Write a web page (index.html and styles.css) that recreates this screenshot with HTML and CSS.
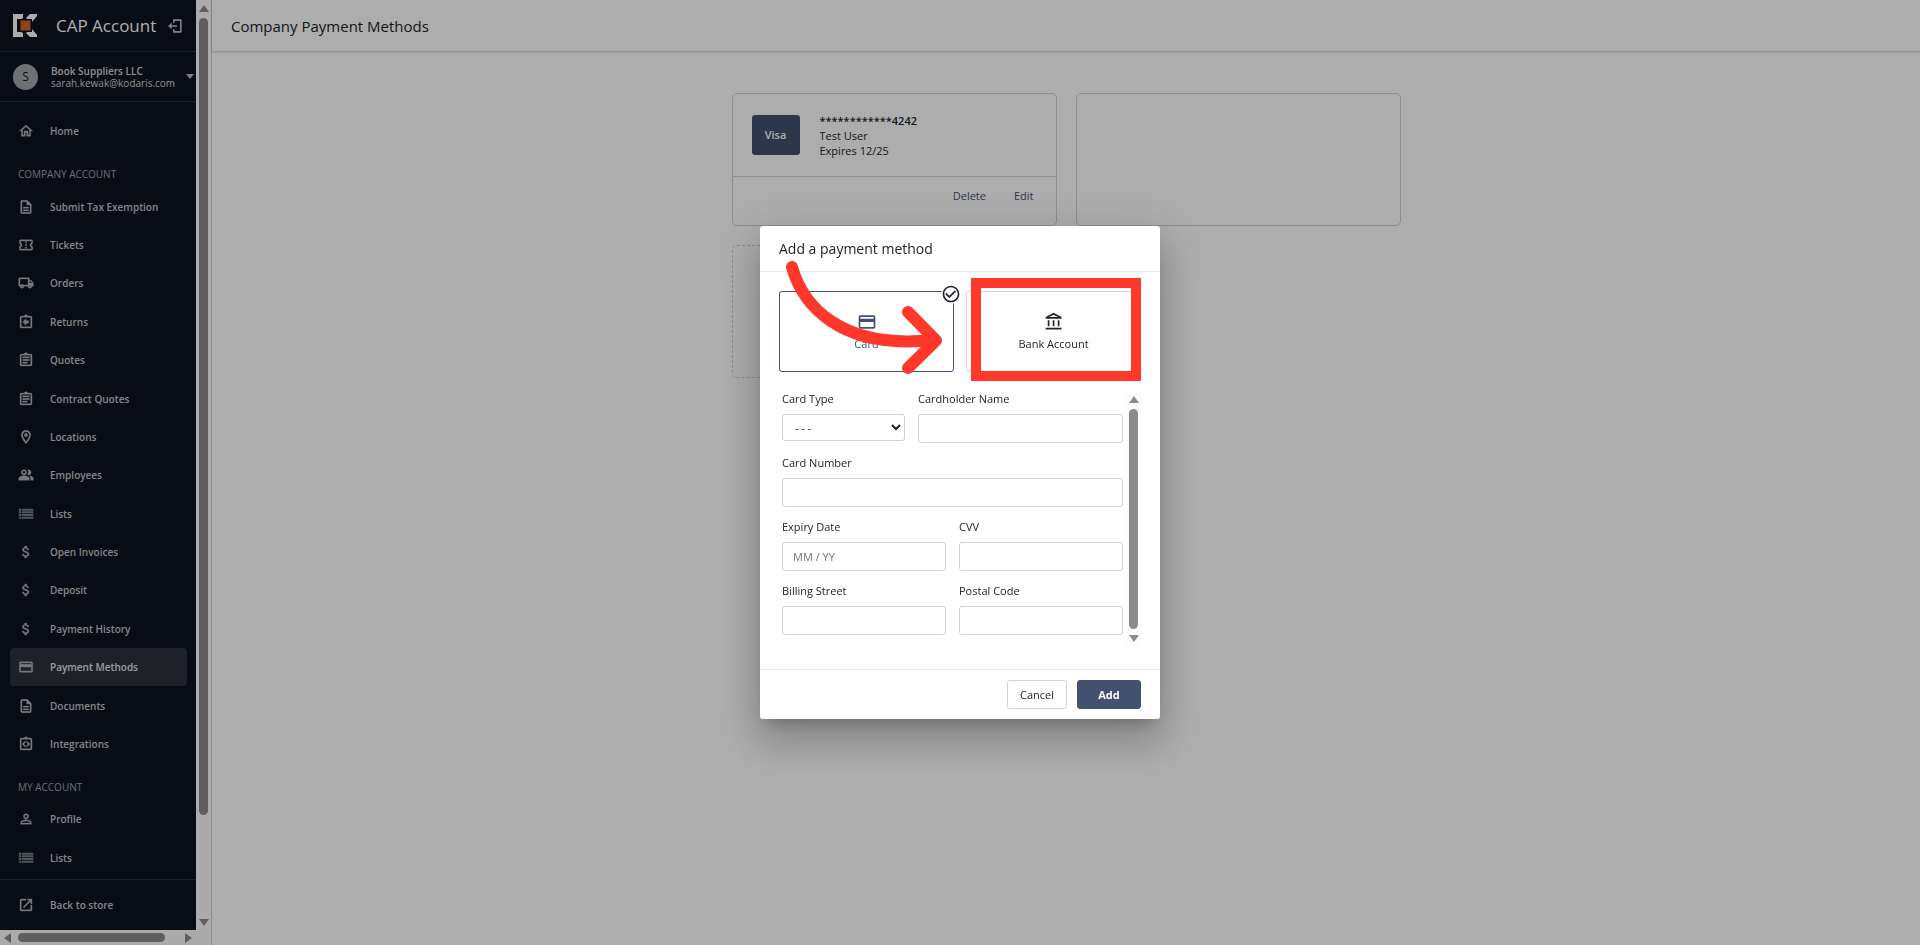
FILE: index.html
```html
<!DOCTYPE html>
<html lang="en">
<head>
    <meta charset="UTF-8">
    <meta name="viewport" content="width=device-width, initial-scale=1.0">
    <title>Company Payment Methods</title>
    <link rel="stylesheet" href="styles.css">
</head>
<body>
    <!-- Icon set -->
    <svg class="icon-set" aria-hidden="true">
        <symbol id="home" viewBox="0 0 24 24"><path d="M12 5.69l5 4.5V18h-2v-6H9v6H7v-7.81l5-4.5M12 3L2 12h3v8h6v-6h2v6h6v-8h3L12 3z"/></symbol>
        <symbol id="document" viewBox="0 0 24 24"><path d="M8 16h8v2H8zm0-4h8v2H8zm6-10H6c-1.1 0-2 .9-2 2v16c0 1.1.89 2 1.99 2H18c1.1 0 2-.9 2-2V8l-6-6zm4 18H6V4h7v5h5v11z"/></symbol>
        <symbol id="ticket" viewBox="0 0 24 24"><path d="M22 10V6c0-1.11-.9-2-2-2H4c-1.1 0-1.99.89-1.99 2v4c1.1 0 1.99.9 1.99 2s-.89 2-2 2v4c0 1.1.9 2 2 2h16c1.1 0 2-.9 2-2v-4c-1.1 0-2-.9-2-2s.9-2 2-2zm-2-1.46c-1.19.69-2 1.99-2 3.46s.81 2.77 2 3.46V18H4v-2.54c1.19-.69 2-1.99 2-3.46 0-1.48-.8-2.77-1.99-3.46L4 6h16v2.54zM11 15h2v2h-2zm0-4h2v2h-2zm0-4h2v2h-2z"/></symbol>
        <symbol id="truck" viewBox="0 0 24 24"><path d="M20 8h-3V4H3c-1.1 0-2 .9-2 2v11h2c0 1.66 1.34 3 3 3s3-1.34 3-3h6c0 1.66 1.34 3 3 3s3-1.34 3-3h2v-5l-3-4zm-.5 1.5l1.96 2.5H17V9.5h2.5zM6 18c-.55 0-1-.45-1-1s.45-1 1-1 1 .45 1 1-.45 1-1 1zm2.22-3c-.55-.61-1.33-1-2.22-1s-1.67.39-2.22 1H3V6h12v9H8.22zM18 18c-.55 0-1-.45-1-1s.45-1 1-1 1 .45 1 1-.45 1-1 1z"/></symbol>
        <symbol id="return" viewBox="0 0 24 24"><path d="M19 3h-4.18C14.4 1.84 13.3 1 12 1s-2.4.84-2.82 2H5c-1.1 0-2 .9-2 2v14c0 1.1.9 2 2 2h14c1.1 0 2-.9 2-2V5c0-1.1-.9-2-2-2zm0 16H5V5h14v14zM12 17l-5-5 5-5v3h4v4h-4v3z"/></symbol>
        <symbol id="quote" viewBox="0 0 24 24"><path d="M19 3h-4.18C14.4 1.84 13.3 1 12 1s-2.4.84-2.82 2H5c-1.1 0-2 .9-2 2v14c0 1.1.9 2 2 2h14c1.1 0 2-.9 2-2V5c0-1.1-.9-2-2-2zm0 16H5V5h14v14zM7 15h7v2H7zm0-4h10v2H7zm0-4h10v2H7z"/></symbol>
        <symbol id="pin" viewBox="0 0 24 24"><path d="M12 2C8.13 2 5 5.13 5 9c0 5.25 7 13 7 13s7-7.75 7-13c0-3.87-3.13-7-7-7zM7 9c0-2.76 2.24-5 5-5s5 2.24 5 5c0 2.88-2.88 7.19-5 9.88C9.92 16.21 7 11.85 7 9z"/><circle cx="12" cy="9" r="2.5"/></symbol>
        <symbol id="people" viewBox="0 0 24 24"><path fill-rule="evenodd" d="M9 4a4 4 0 1 0 0 8 4 4 0 0 0 0-8zm0 2a2 2 0 1 1 0 4 2 2 0 0 1 0-4zM1 20v-3c0-2.7 5.3-4 8-4s8 1.3 8 4v3zM14.5 4.200a4 4 0 1 1 0 7.600c1.300-2.300 1.300-5.300 0-7.600zM17 13.300c2.700.500 6 1.700 6 3.700v3h-4v-3c0-1.600-.800-2.800-2-3.700z"/></symbol>
        <symbol id="list" viewBox="0 0 24 24"><path d="M1 4h4v3H1zm5 0h17v3H6zM1 8h4v3H1zm5 0h17v3H6zM1 12h4v3H1zm5 0h17v3H6zM1 16h4v3H1zm5 0h17v3H6z"/></symbol>
        <symbol id="dollar" viewBox="0 0 24 24"><path d="M11.800 10.900c-2.270-.590-3-1.200-3-2.150 0-1.090 1.010-1.850 2.700-1.850 1.780 0 2.440.850 2.500 2.100h2.210c-.070-1.720-1.120-3.300-3.210-3.810V3h-3v2.160c-1.940.420-3.500 1.680-3.500 3.610 0 2.310 1.910 3.460 4.700 4.130 2.500.600 3 1.480 3 2.410 0 .690-.490 1.790-2.700 1.790-2.060 0-2.870-.920-2.980-2.100h-2.200c.120 2.190 1.760 3.420 3.680 3.830V21h3v-2.150c1.950-.370 3.500-1.500 3.500-3.550 0-2.840-2.430-3.810-4.700-4.400z"/></symbol>
        <symbol id="card" viewBox="0 0 24 24"><path d="M20 4H4c-1.110 0-1.990.890-1.990 2L2 18c0 1.110.890 2 2 2h16c1.110 0 2-.890 2-2V6c0-1.110-.890-2-2-2zm0 14H4v-6h16v6zm0-10H4V6h16v2z"/></symbol>
        <symbol id="code" viewBox="0 0 24 24"><path d="M19 3h-4.180C14.400 1.840 13.300 1 12 1s-2.400.840-2.820 2H5c-1.100 0-2 .900-2 2v14c0 1.100.900 2 2 2h14c1.100 0 2-.900 2-2V5c0-1.100-.900-2-2-2zm0 16H5V5h14v14zM11 14.200L8.800 12 11 9.800V7.200L6.200 12 11 16.800zM13 14.200l2.200-2.200L13 9.800V7.200l4.800 4.800-4.800 4.800z"/></symbol>
        <symbol id="person" viewBox="0 0 24 24"><path d="M12 5.900c1.160 0 2.100.940 2.100 2.100s-.940 2.100-2.100 2.100S9.900 9.160 9.900 8s.940-2.100 2.100-2.100m0 9c2.970 0 6.100 1.460 6.100 2.100v1.100H5.900V17c0-.640 3.130-2.100 6.100-2.100M12 4C9.790 4 8 5.790 8 8s1.790 4 4 4 4-1.790 4-4-1.790-4-4-4zm0 9c-2.670 0-8 1.340-8 4v3h16v-3c0-2.660-5.330-4-8-4z"/></symbol>
        <symbol id="external" viewBox="0 0 24 24"><path d="M19 19H5V5h7V3H5c-1.110 0-2 .900-2 2v14c0 1.100.890 2 2 2h14c1.100 0 2-.900 2-2v-7h-2v7zM14 3v2h3.590l-9.830 9.830 1.410 1.410L19 6.410V10h2V3h-7z"/></symbol>
        <symbol id="bank" viewBox="0 0 24 24"><path d="M6.500 10h-2v7h2v-7zm6 0h-2v7h2v-7zm8.500 9H2v2h19v-2zm-2.500-9h-2v7h2v-7zm-7-6.740L16.710 6H6.290l5.210-2.740m0-2.260L2 6v2h19V6l-9.500-5z"/></symbol>
        <symbol id="check" viewBox="0 0 24 24"><path d="M16.590 7.580L10 14.170l-3.590-3.580L5 12l5 5 8-8zM12 2C6.480 2 2 6.480 2 12s4.480 10 10 10 10-4.480 10-10S17.520 2 12 2zm0 18c-4.420 0-8-3.580-8-8s3.580-8 8-8 8 3.580 8 8-3.580 8-8 8z"/></symbol>
        <symbol id="logout" viewBox="0 0 24 24"><path d="M9 2h12c.6 0 1 .4 1 1v18c0 .6-.4 1-1 1H9v-5h2.500v2.500h8v-15h-8V7H9zM7 7v3.800h8v2.400H7V17l-5.500-5z"/></symbol>
    </svg>

    <div class="page">
        <aside class="sidebar">
            <div class="sidebar-row">
                <div class="sidebar-content">
                    <div class="brand">
                        <svg class="logo" viewBox="0 0 25 23" aria-hidden="true">
                            <path fill="#fff" d="M0 0h10v4l-2 1H4v13h4l2 1v4H0z"/>
                            <path fill="#fff" d="M17 0h7v2l-5 6v7l5 6v2h-7l-4-4 2-2h3V6h-3l-2-2z"/>
                            <path fill="#0d1420" d="M6 5h13v13H6z"/>
                            <path fill="#d5622b" d="M7.500 6.500h10v10h-10z"/>
                        </svg>
                        <span class="brand-name">CAP Account</span>
                        <button class="icon-button" aria-label="Log out"><svg class="icon"><use href="#logout"/></svg></button>
                    </div>

                    <button class="account">
                        <span class="avatar">S</span>
                        <span class="account-text"><strong>Book Suppliers LLC</strong><br>sarah.kewak@kodaris.com</span>
                        <span class="caret"></span>
                    </button>

                    <nav class="nav">
                        <a class="nav-link" href="#"><svg class="icon"><use href="#home"/></svg>Home</a>
                        <h2 class="nav-title">COMPANY ACCOUNT</h2>
                        <a class="nav-link" href="#"><svg class="icon"><use href="#document"/></svg>Submit Tax Exemption</a>
                        <a class="nav-link" href="#"><svg class="icon"><use href="#ticket"/></svg>Tickets</a>
                        <a class="nav-link" href="#"><svg class="icon"><use href="#truck"/></svg>Orders</a>
                        <a class="nav-link" href="#"><svg class="icon"><use href="#return"/></svg>Returns</a>
                        <a class="nav-link" href="#"><svg class="icon"><use href="#quote"/></svg>Quotes</a>
                        <a class="nav-link" href="#"><svg class="icon"><use href="#quote"/></svg>Contract Quotes</a>
                        <a class="nav-link" href="#"><svg class="icon"><use href="#pin"/></svg>Locations</a>
                        <a class="nav-link" href="#"><svg class="icon"><use href="#people"/></svg>Employees</a>
                        <a class="nav-link" href="#"><svg class="icon faint"><use href="#list"/></svg>Lists</a>
                        <a class="nav-link" href="#"><svg class="icon"><use href="#dollar"/></svg>Open Invoices</a>
                        <a class="nav-link" href="#"><svg class="icon"><use href="#dollar"/></svg>Deposit</a>
                        <a class="nav-link" href="#"><svg class="icon"><use href="#dollar"/></svg>Payment History</a>
                        <a class="nav-link active" href="#"><svg class="icon"><use href="#card"/></svg>Payment Methods</a>
                        <a class="nav-link" href="#"><svg class="icon"><use href="#document"/></svg>Documents</a>
                        <a class="nav-link" href="#"><svg class="icon"><use href="#code"/></svg>Integrations</a>
                        <h2 class="nav-title">MY ACCOUNT</h2>
                        <a class="nav-link" href="#"><svg class="icon"><use href="#person"/></svg>Profile</a>
                        <a class="nav-link" href="#"><svg class="icon faint"><use href="#list"/></svg>Lists</a>
                    </nav>

                    <div class="sidebar-footer">
                        <a class="nav-link" href="#"><svg class="icon"><use href="#external"/></svg>Back to store</a>
                    </div>
                </div>
                <div class="scrollbar">
                    <span class="arrow-up"></span>
                    <span class="track"><span class="thumb" style="height: 89%"></span></span>
                    <span class="arrow-down"></span>
                </div>
            </div>
            <div class="scrollbar-bottom">
                <span class="arrow-left"></span>
                <span class="track"><span class="thumb" style="width: 92%"></span></span>
                <span class="arrow-right"></span>
            </div>
        </aside>

        <main class="main">
            <header class="topbar"><h1>Company Payment Methods</h1></header>
            <div class="cards">
                <section class="pay-card">
                    <div class="pay-card-body">
                        <span class="card-brand">Visa</span>
                        <p class="card-text"><strong>************4242</strong><br>Test User<br>Expires 12/25</p>
                    </div>
                    <div class="pay-card-actions">
                        <button class="text-button">Delete</button>
                        <button class="text-button">Edit</button>
                    </div>
                </section>
                <section class="pay-card"></section>
                <section class="pay-card dashed"></section>
            </div>
        </main>
    </div>

    <!-- Dialog -->
    <div class="overlay">
        <form class="dialog" role="dialog" aria-labelledby="dialogTitle">
            <h2 class="dialog-title" id="dialogTitle">Add a payment method</h2>

            <div class="dialog-body">
                <div class="methods">
                    <button type="button" class="method selected">
                        <svg class="icon"><use href="#card"/></svg>
                        <span>Card</span>
                        <span class="method-check"><svg class="icon"><use href="#check"/></svg></span>
                    </button>
                    <button type="button" class="method">
                        <svg class="icon"><use href="#bank"/></svg>
                        <span>Bank Account</span>
                    </button>
                    <svg class="hint-arrow" viewBox="0 0 160 116" aria-hidden="true">
                        <path d="M8 7C18 43 54 90 148 80M124 52L152 80.500L124 108"/>
                    </svg>
                    <span class="hint-box"></span>
                </div>

                <div class="form-scroll">
                    <div class="fields">
                        <div class="field-row">
                            <div class="field field-type">
                                <label for="cardType">Card Type</label>
                                <div class="select-wrap">
                                    <select id="cardType"><option>- - -</option></select>
                                    <svg class="chevron" viewBox="0 0 10 7" aria-hidden="true"><path d="M1 1l4 4 4-4"/></svg>
                                </div>
                            </div>
                            <div class="field field-name">
                                <label for="cardName">Cardholder Name</label>
                                <input id="cardName" type="text">
                            </div>
                        </div>
                        <div class="field-row">
                            <div class="field">
                                <label for="cardNumber">Card Number</label>
                                <input id="cardNumber" type="text">
                            </div>
                        </div>
                        <div class="field-row">
                            <div class="field">
                                <label for="expiry">Expiry Date</label>
                                <input id="expiry" type="text" placeholder="MM / YY">
                            </div>
                            <div class="field">
                                <label for="cvv">CVV</label>
                                <input id="cvv" type="text">
                            </div>
                        </div>
                        <div class="field-row">
                            <div class="field">
                                <label for="street">Billing Street</label>
                                <input id="street" type="text">
                            </div>
                            <div class="field">
                                <label for="postal">Postal Code</label>
                                <input id="postal" type="text">
                            </div>
                        </div>
                    </div>
                    <div class="scrollbar">
                        <span class="arrow-up"></span>
                        <span class="track"><span class="thumb" style="height: 100%"></span></span>
                        <span class="arrow-down"></span>
                    </div>
                </div>
            </div>

            <div class="dialog-footer">
                <button type="button" class="button">Cancel</button>
                <button type="submit" class="button primary">Add</button>
            </div>
        </form>
    </div>
</body>
</html>
```
FILE: styles.css
```css
* {
    box-sizing: border-box;
}

body {
    margin: 0;
    font-family: "Open Sans", "Noto Sans", sans-serif;
    font-size: 11px;
    color: #212529;
    background-color: #fff;
}

button, input, select {
    font: inherit;
    color: inherit;
}

button {
    border: none;
    background: none;
    padding: 0;
    cursor: pointer;
}

h1, h2, p {
    margin: 0;
    font-weight: normal;
}

.icon-set {
    display: none;
}

.icon {
    width: 16px;
    height: 16px;
    flex: none;
    fill: currentColor;
}

.page {
    display: flex;
    height: 100vh;
}

/* Sidebar */
.sidebar {
    display: flex;
    flex-direction: column;
    width: 212px;
    flex: none;
    border-right: 1px solid #d0d0d0;
    background-color: #fcfcfc;
}

.sidebar-row {
    display: flex;
    flex: 1;
    min-height: 0;
}

.sidebar-content {
    display: flex;
    flex-direction: column;
    flex: 1;
    min-width: 0;
    background-color: #0d1420;
    color: #d4d4d4;
}

.brand {
    display: flex;
    align-items: center;
    height: 52px;
    padding: 0 13px;
    border-bottom: 1px solid #2a303b;
}

.logo {
    width: 25px;
    height: 23px;
}

.brand-name {
    flex: 1;
    margin-left: 18px;
    font-size: 17px;
    line-height: 20px;
    color: #fff;
    white-space: nowrap;
}

.icon-button {
    display: flex;
    color: #b9bcc1;
}

.account {
    display: flex;
    align-items: center;
    height: 50px;
    padding: 0 2px 0 13px;
    border-bottom: 1px solid #2a303b;
    text-align: left;
}

.avatar {
    width: 25px;
    height: 26px;
    border-radius: 50%;
    background-color: #a3a6ab;
    color: #0d1420;
    font-size: 12px;
    line-height: 26px;
    text-align: center;
}

.account-text {
    flex: 1;
    margin-left: 13px;
    font-size: 10px;
    line-height: 12px;
    white-space: nowrap;
}

.account-text strong {
    font-weight: 600;
}

.caret {
    border: 4px solid transparent;
    border-top: 5px solid #b9bcc1;
    border-bottom: none;
}

.nav {
    display: flex;
    flex-direction: column;
    flex: 1;
    padding: 10px 0 2px;
}

.nav-link {
    display: flex;
    align-items: center;
    flex: 1;
    gap: 16px;
    margin: 0 9px 0 10px;
    padding-left: 8px;
    border-radius: 4px;
    color: #c4c5c7;
    font-size: 10px;
    font-weight: 600;
    text-decoration: none;
    white-space: nowrap;
}

.nav-link .icon {
    color: #b0b3b7;
    stroke: currentColor;
    stroke-width: 0.5px;
}

.nav-link .faint {
    color: #7b7f85;
    stroke: none;
}

.nav-link.active {
    background-color: #2d323c;
    color: #e4e4e6;
}

.nav-title {
    height: 37px;
    padding: 8px 18px 0;
    font-size: 10px;
    line-height: 32px;
    color: #a0a2a6;
}

.sidebar-footer {
    display: flex;
    height: 51px;
    border-top: 1px solid #2a303b;
}

/* Scrollbars */
.scrollbar, .scrollbar-bottom {
    display: flex;
    align-items: center;
    flex: none;
    background-color: #fcfcfc;
}

.scrollbar {
    flex-direction: column;
    width: 15px;
    padding: 5px 3px 4px;
    gap: 6px;
}

.scrollbar-bottom {
    height: 15px;
    width: 196px;
    padding: 3px 4px;
    gap: 7px;
}

.track {
    display: flex;
    flex: 1;
    align-self: stretch;
}

.thumb {
    flex: none;
    width: 100%;
    border-radius: 5px;
    background-color: #8b8b8b;
}

.arrow-up, .arrow-down, .arrow-left, .arrow-right {
    border: 5px solid transparent;
}

.arrow-up {
    border-top: none;
    border-bottom: 7px solid #8b8b8b;
}

.arrow-down {
    border-bottom: none;
    border-top: 7px solid #8b8b8b;
}

.arrow-left {
    border-left: none;
    border-right: 7px solid #8b8b8b;
}

.arrow-right {
    border-right: none;
    border-left: 7px solid #8b8b8b;
}

/* Main */
.main {
    flex: 1;
    min-width: 0;
}

.topbar {
    display: flex;
    align-items: center;
    height: 51px;
    padding: 0 19px;
    box-shadow: 0 1px 2px rgba(0, 0, 0, 0.25);
}

.topbar h1 {
    font-size: 15px;
}

.cards {
    display: grid;
    grid-template-columns: 1fr 1fr;
    grid-auto-rows: 133px;
    gap: 19px;
    max-width: 669px;
    margin: 42px auto 0;
}

.pay-card {
    display: flex;
    flex-direction: column;
    border: 1px solid #d0d0d0;
    border-radius: 5px;
}

.dashed {
    border-style: dashed;
}

.pay-card-body {
    display: flex;
    align-items: flex-start;
    gap: 20px;
    height: 83px;
    padding: 21px 19px;
    border-bottom: 1px solid #d0d0d0;
}

.card-brand {
    width: 48px;
    border-radius: 3px;
    background-color: #445070;
    color: #fff;
    font-weight: 600;
    line-height: 40px;
    text-align: center;
}

.card-text {
    margin-top: -2px;
    line-height: 15px;
}

.card-text strong {
    font-weight: 600;
}

.pay-card-actions {
    display: flex;
    justify-content: flex-end;
    gap: 28px;
    padding: 11px 22px;
}

.text-button {
    color: #445070;
    line-height: 16px;
}

/* Dialog */
.overlay {
    position: fixed;
    inset: 0;
    display: flex;
    align-items: center;
    justify-content: center;
    background-color: rgba(0, 0, 0, 0.32);
}

.dialog {
    width: 400px;
    border-radius: 3px;
    background-color: #fff;
    box-shadow: 0 11px 15px -7px rgba(0, 0, 0, 0.2), 0 24px 38px 3px rgba(0, 0, 0, 0.14), 0 9px 46px 8px rgba(0, 0, 0, 0.12);
}

.dialog-title {
    padding: 0 19px;
    border-bottom: 1px solid #e9e9e9;
    font-size: 14px;
    line-height: 45px;
}

.dialog-body {
    padding: 19px 19px 23px;
}

.methods {
    position: relative;
    display: flex;
    gap: 12px;
}

.method {
    position: relative;
    display: flex;
    flex-direction: column;
    align-items: center;
    justify-content: center;
    flex: 1;
    gap: 4px;
    height: 81px;
    border: 1px solid #ced4da;
    border-radius: 3px;
}

.method .icon {
    width: 20px;
    height: 20px;
}

.method.selected {
    border-color: #445070;
    color: #445070;
}

.method-check {
    position: absolute;
    top: -8px;
    right: -8px;
    display: flex;
    border-radius: 50%;
    background-color: #fff;
    color: #212529;
}

/* Red markers drawn over the method buttons */
.hint-arrow {
    position: absolute;
    top: -31px;
    left: 5px;
    width: 160px;
    height: 116px;
    fill: none;
    stroke: #ff382b;
    stroke-width: 12;
    stroke-linecap: round;
    stroke-linejoin: round;
    pointer-events: none;
}

.hint-box {
    position: absolute;
    top: -13px;
    right: 0;
    width: 170px;
    height: 103px;
    border: 10px solid #ff382b;
    pointer-events: none;
}

.form-scroll {
    display: flex;
    margin-top: 19px;
}

.fields {
    display: flex;
    flex-direction: column;
    flex: 1;
    gap: 12px;
    padding: 0 3px 11px;
}

.field-row {
    display: flex;
    gap: 13px;
}

.field {
    flex: 1;
    min-width: 0;
}

.field-type {
    flex: 3;
}

.field-name {
    flex: 5;
}

.field label {
    display: block;
    margin-bottom: 7px;
    line-height: 16px;
}

.field input, .field select {
    display: block;
    width: 100%;
    height: 29px;
    padding: 0 10px;
    border: 1px solid #ced4da;
    border-radius: 3px;
    background-color: #fff;
}

.field select {
    height: 27px;
    padding-left: 12px;
    appearance: none;
}

.select-wrap {
    position: relative;
}

.chevron {
    position: absolute;
    top: 10px;
    right: 4px;
    width: 10px;
    height: 7px;
    fill: none;
    stroke: #212529;
    stroke-width: 2;
    pointer-events: none;
}

.field input::placeholder {
    color: #757575;
}

.dialog-footer {
    display: flex;
    justify-content: flex-end;
    gap: 10px;
    padding: 10px 19px;
    border-top: 1px solid #e9e9e9;
}

.button {
    height: 29px;
    padding: 0 12px;
    border: 1px solid #ced4da;
    border-radius: 3px;
}

.button.primary {
    width: 64px;
    border-color: #445070;
    background-color: #445070;
    color: #fff;
    font-weight: bold;
}
```
